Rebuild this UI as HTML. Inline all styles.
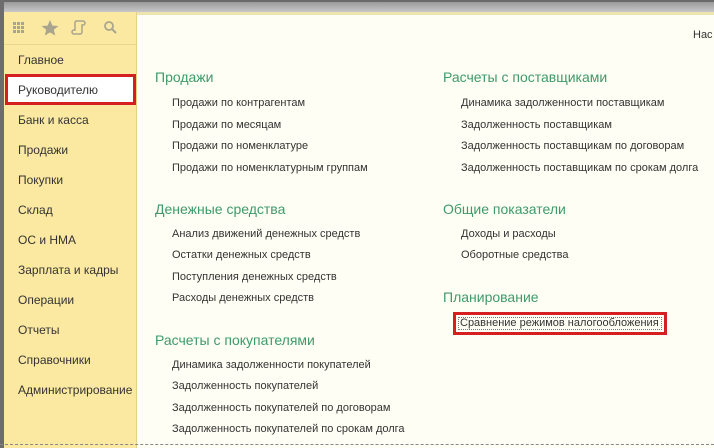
<!DOCTYPE html>
<html><head><meta charset="utf-8"><style>
*{margin:0;padding:0;box-sizing:border-box}
body{width:714px;height:448px;overflow:hidden;background:#fefef4;font-family:"Liberation Sans",sans-serif;position:relative}
.top{position:absolute;left:0;top:0;width:714px;height:12px;background:linear-gradient(#9a9a9a,#c8c8c8);border-top:2px solid #6a6a6a}
.top2{position:absolute;left:137px;top:12px;width:577px;height:3px;background:#efe3b0}
.lb{position:absolute;left:0;top:0;width:4px;height:448px;background:#6d6d6d}
.side{position:absolute;left:4px;top:12px;width:133px;height:436px;background:#fbe9a2;border-right:1px solid #e3d38a}
.icons{position:absolute;left:4px;top:12px;width:133px;height:33px;border-bottom:1px solid #e8d88f}
.si{position:absolute;left:18px;font-size:12px;color:#333}
.red1{position:absolute;left:5px;top:74px;width:131px;height:31px;background:#fff;border:3px solid #d42020}
.h{position:absolute;font-size:14px;color:#3f9a6b}
.i{position:absolute;font-size:11px;color:#333}
.red2{position:absolute;left:453px;top:312px;width:214px;height:23px;border:3px solid #d42020}
.red2 div{position:absolute;left:2px;top:2px;right:2px;bottom:2px;border:1px dotted #777}
.dots{position:absolute;left:0;top:444px;width:714px;border-top:1px dashed #888}
</style></head><body>
<div class="top"></div><div class="top2"></div>
<div class="side"></div><div class="lb"></div>
<div class="icons">
<svg width="133" height="33" viewBox="0 0 133 33">
<g fill="#a9a48e">
<rect x="9" y="10" width="3" height="3"/><rect x="13" y="10" width="3" height="3"/><rect x="17" y="10" width="3" height="3"/>
<rect x="9" y="14" width="3" height="3"/><rect x="13" y="14" width="3" height="3"/><rect x="17" y="14" width="3" height="3"/>
<rect x="9" y="18" width="3" height="3"/><rect x="13" y="18" width="3" height="3"/><rect x="17" y="18" width="3" height="3"/>
<path d="M46 8 L48.4 13.6 L54.5 14 L49.8 17.8 L51.3 23.6 L46 20.4 L40.7 23.6 L42.2 17.8 L37.5 14 L43.6 13.6Z"/>
</g>
<path d="M72 9 h7 a2 2 0 0 1 0 4 h-1 v7 a2 2 0 0 1 -2 2 h-6 a2 2 0 0 1 0 -4 h1 v-7 a2 2 0 0 1 1 -2z" fill="none" stroke="#a9a48e" stroke-width="1.5"/>
<circle cx="105" cy="14" r="4" fill="none" stroke="#a9a48e" stroke-width="1.8"/>
<path d="M108 17 L112 21" stroke="#a9a48e" stroke-width="2"/>
</svg></div>
<div class="red1"></div>
<div class="si" style="top:53px">Главное</div>
<div class="si" style="top:83px">Руководителю</div>
<div class="si" style="top:113px">Банк и касса</div>
<div class="si" style="top:143px">Продажи</div>
<div class="si" style="top:173px">Покупки</div>
<div class="si" style="top:203px">Склад</div>
<div class="si" style="top:233px">ОС и НМА</div>
<div class="si" style="top:263px">Зарплата и кадры</div>
<div class="si" style="top:293px">Операции</div>
<div class="si" style="top:323px">Отчеты</div>
<div class="si" style="top:353px">Справочники</div>
<div class="si" style="top:383px">Администрирование</div>
<div class="i" style="left:693px;top:29px">Нас</div>
<div class="h" style="left:155px;top:69px">Продажи</div>
<div class="i" style="left:172px;top:97px">Продажи по контрагентам</div>
<div class="i" style="left:172px;top:119px">Продажи по месяцам</div>
<div class="i" style="left:172px;top:140px">Продажи по номенклатуре</div>
<div class="i" style="left:172px;top:162px">Продажи по номенклатурным группам</div>
<div class="h" style="left:155px;top:201px">Денежные средства</div>
<div class="i" style="left:172px;top:228px">Анализ движений денежных средств</div>
<div class="i" style="left:172px;top:249px">Остатки денежных средств</div>
<div class="i" style="left:172px;top:271px">Поступления денежных средств</div>
<div class="i" style="left:172px;top:292px">Расходы денежных средств</div>
<div class="h" style="left:155px;top:332px">Расчеты с покупателями</div>
<div class="i" style="left:172px;top:359px">Динамика задолженности покупателей</div>
<div class="i" style="left:172px;top:380px">Задолженность покупателей</div>
<div class="i" style="left:172px;top:402px">Задолженность покупателей по договорам</div>
<div class="i" style="left:172px;top:423px">Задолженность покупателей по срокам долга</div>
<div class="h" style="left:443px;top:69px">Расчеты с поставщиками</div>
<div class="i" style="left:461px;top:97px">Динамика задолженности поставщикам</div>
<div class="i" style="left:461px;top:119px">Задолженность поставщикам</div>
<div class="i" style="left:461px;top:140px">Задолженность поставщикам по договорам</div>
<div class="i" style="left:461px;top:162px">Задолженность поставщикам по срокам долга</div>
<div class="h" style="left:443px;top:201px">Общие показатели</div>
<div class="i" style="left:461px;top:228px">Доходы и расходы</div>
<div class="i" style="left:461px;top:249px">Оборотные средства</div>
<div class="h" style="left:443px;top:289px">Планирование</div>
<div class="red2"><div></div></div>
<div class="i" style="left:460px;top:317px">Сравнение режимов налогообложения</div>
<div class="dots"></div>
</body></html>
